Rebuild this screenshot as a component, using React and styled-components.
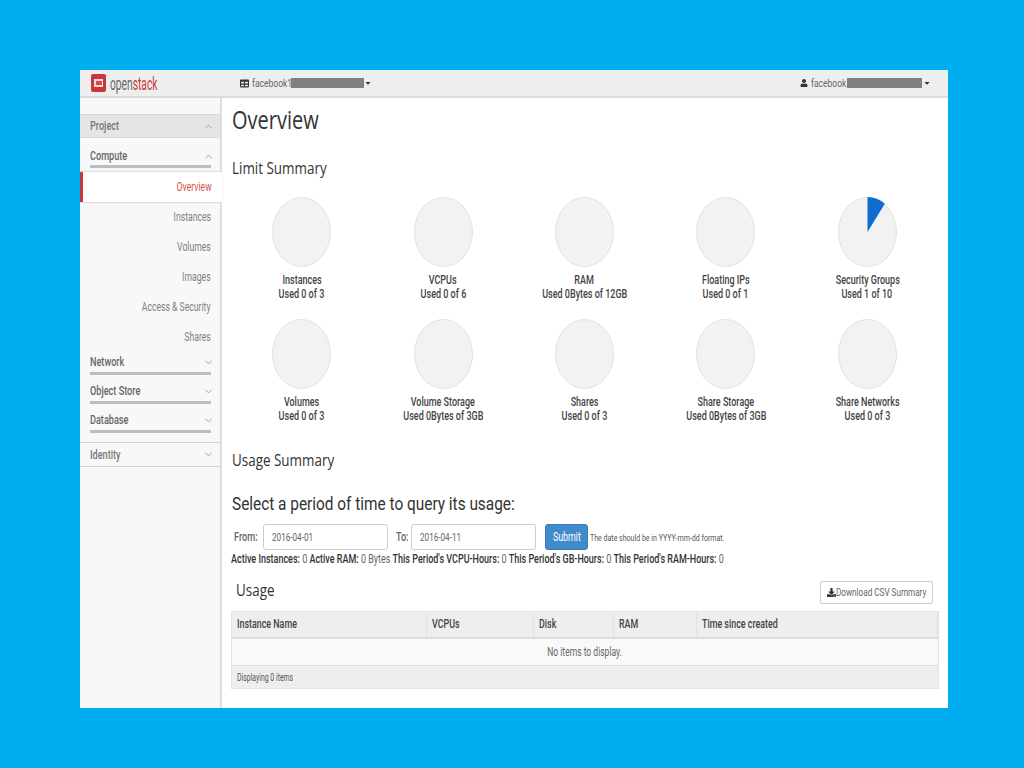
import React from "react";
import styled, { createGlobalStyle } from "styled-components";
import { ChevronUp, ChevronDown } from "lucide-react";
import { FaUser, FaDownload, FaTable, FaCaretDown } from "react-icons/fa";

const Global = createGlobalStyle`
  html, body { margin: 0; padding: 0; background: #00aeef; }
  * { box-sizing: border-box; }
`;

const Stage = styled.div`
  width: 1024px;
  height: 768px;
  padding: 70px 76px 60px 80px;
  background: #00aeef;
  font-family: Roboto, sans-serif;
  font-size: 12px;
  color: #333;
`;

// the screenshot is squeezed sideways, so text is narrowed to match it
const Narrow = styled.span`
  display: inline-block;
  flex: none;
  white-space: nowrap;
  transform: scaleX(${(p) => p.$sx || 0.74});
  transform-origin: ${(p) => p.$o || "left"} center;
`;

const Fixed = styled.span`
  display: inline-block;
  flex: none;
  width: ${(p) => p.$w}px;
`;

const Window = styled.div`
  width: 868px;
  height: 638px;
  background: #fff;
  display: flex;
  flex-direction: column;
  overflow: hidden;
`;

const Navbar = styled.header`
  height: 28px;
  flex: none;
  background: #eeeeee;
  border-bottom: 2px solid #dcdcdc;
  display: flex;
  align-items: center;
  padding: 0 17px 0 11px;
  color: #555;
`;

const Brand = styled.div`
  width: 149px;
  display: flex;
  align-items: center;
  gap: 4px;
  font-size: 19px;
  color: #666;
  & b { font-weight: 400; color: #c8383a; }
`;

const Project = styled.div`
  display: flex;
  align-items: center;
  gap: 3px;
  font-size: 11.5px;
  color: #666;
  & svg { flex: none; color: #333; }
`;

const Caret = styled(FaCaretDown)`
  margin-left: ${(p) => p.$ml}px;
`;

const Redacted = styled.span`
  display: inline-block;
  height: 10px;
  width: ${(p) => p.$w}px;
  background: #808080;
`;

const UserMenu = styled(Project)`
  margin-left: auto;
`;

const Body = styled.div`
  flex: 1;
  display: flex;
  min-height: 0;
`;

const Sidebar = styled.nav`
  width: 142px;
  flex: none;
  background: #f8f8f8;
  border-right: 2px solid #dedede;
  padding-top: 16px;
`;

const Panel = styled.div`
  height: 24px;
  display: flex;
  align-items: center;
  justify-content: space-between;
  padding: 0 9px 0 10px;
  background: #e5e5e5;
  border-top: 1px solid #dadada;
  border-bottom: 1px solid #dadada;
  font-weight: 500;
  color: #777;
  & svg { margin-right: -3px; color: #999; }
`;

const Group = styled.div`
  height: ${(p) => p.$h || 29}px;
  padding: ${(p) => p.$pt || 1}px 9px 0 10px;
`;

const GroupHead = styled.div`
  display: flex;
  align-items: center;
  justify-content: space-between;
  height: ${(p) => (p.$compact ? 20 : 22)}px;
  padding-bottom: 1px;
  font-weight: 500;
  color: #666;
  border-bottom: 3px solid #bdbdbd;
  & svg { margin-right: -3px; color: #999; }
`;

const Leaf = styled.div`
  height: 30px;
  display: flex;
  align-items: center;
  justify-content: flex-end;
  padding-right: ${(p) => (p.$active ? 10 : 9)}px;
  color: ${(p) => (p.$active ? "#d2533f" : "#808080")};
  background: ${(p) => (p.$active ? "#fff" : "transparent")};
  border-left: ${(p) => (p.$active ? "3px solid #c8383a" : "0")};
  width: ${(p) => (p.$active ? "142px" : "auto")};
  box-shadow: ${(p) => (p.$active ? "0 1px 1px #ddd, 0 -1px 1px #ddd" : "none")};
`;

const Identity = styled.div`
  height: 25px;
  margin-top: 3px;
  display: flex;
  align-items: center;
  justify-content: space-between;
  padding: 0 9px 0 10px;
  border-top: 1px solid #d0d0d0;
  border-bottom: 1px solid #d0d0d0;
  font-weight: 500;
  color: #777;
  & svg { margin-right: -3px; color: #999; }
`;

const Main = styled.main`
  flex: 1;
  padding: 0 9px;
  min-width: 0;
`;

const PageTitle = styled.h1`
  margin: 4px 0 0 1px;
  height: 34px;
  font-family: "Open Sans", sans-serif;
  font-weight: 400;
  font-size: 26px;
  line-height: 34px;
  color: #333;
  transform: scaleX(0.77);
  transform-origin: left;
`;

const Section = styled.h2`
  margin: ${(p) => p.$mt || 0}px 0 0 1px;
  height: 24px;
  font-family: "Open Sans", sans-serif;
  font-weight: 400;
  font-size: 17px;
  line-height: 24px;
  color: #333;
  transform: scaleX(0.79);
  transform-origin: left;
`;

const PieGrid = styled.div`
  display: grid;
  grid-template-columns: repeat(5, 1fr);
  row-gap: 17px;
  margin: 17px 1px 0 0;
`;

const PieCell = styled.div`
  display: flex;
  flex-direction: column;
  align-items: center;
  height: 105px;
  font-weight: 500;
  color: #444;
  line-height: 14px;
  text-align: center;
  & svg { margin-bottom: 6px; }
`;

const Question = styled.h3`
  margin: 20px 0 0 1px;
  height: 24px;
  font-family: Roboto, sans-serif;
  font-weight: 400;
  font-size: 18px;
  line-height: 24px;
  color: #333;
  transform: scaleX(0.855);
  transform-origin: left;
`;

const DateForm = styled.div`
  display: flex;
  align-items: center;
  margin-top: 8px;
  height: 26px;
  padding-left: 3px;
  font-weight: 500;
  color: #666;
`;

const DateInput = styled.div`
  height: 26px;
  width: 125px;
  flex: none;
  margin-right: ${(p) => p.$mr}px;
  border: 1px solid #ccc;
  border-radius: 3px;
  padding: 0 8px;
  display: flex;
  align-items: center;
  font-size: 11px;
  font-weight: 400;
  color: #666;
`;

const Submit = styled.button`
  height: 26px;
  width: 43px;
  flex: none;
  padding: 0;
  background: #428bca;
  border: 1px solid #357ebd;
  border-radius: 3px;
  color: #fff;
  font: inherit;
  font-weight: 400;
`;

const Hint = styled.span`
  margin-left: 2px;
  font-weight: 400;
  font-size: 9.5px;
  color: #555;
`;

const Stats = styled.div`
  margin-top: 2px;
  height: 15px;
  line-height: 15px;
  color: #666;
  & b { font-weight: 500; color: #333; }
`;

const UsageBar = styled.div`
  display: flex;
  align-items: center;
  justify-content: space-between;
  height: 24px;
  margin-top: 11px;
  padding: 0 6px 0 5px;
`;

const UsageTitle = styled(Section)`
  margin: 0;
`;

const CsvButton = styled.button`
  width: 113px;
  height: 23px;
  flex: none;
  align-self: flex-end;
  margin-bottom: -2px;
  padding: 0 0 0 6px;
  display: flex;
  align-items: center;
  gap: 0;
  background: #fff;
  border: 1px solid #ccc;
  border-radius: 2px;
  font: inherit;
  font-size: 11px;
  color: #666;
  & svg { flex: none; color: #333; }
`;

const Table = styled.div`
  margin-top: 9px;
  border: 1px solid #e3e3e3;
`;

const HeadRow = styled.div`
  display: grid;
  grid-template-columns: 195px 107px 80px 83px 1fr;
  height: 27px;
  background: #eeeeee;
  border-bottom: 2px solid #ddd;
`;

const HeadCell = styled.div`
  display: flex;
  align-items: center;
  padding: 0 0 2px 5px;
  font-weight: 500;
  color: #444;
  border-right: 1px solid #e2e2e2;
`;

const EmptyRow = styled.div`
  height: 27px;
  display: flex;
  align-items: center;
  justify-content: center;
  background: #f9f9f9;
  color: #666;
  border-bottom: 1px solid #ddd;
`;

const FootRow = styled.div`
  height: 22px;
  display: flex;
  align-items: center;
  padding-left: 5px;
  background: #eeeeee;
  font-size: 10px;
  color: #555;
`;

const Logo = () => (
  <svg width="15" height="18" viewBox="0 0 15 18">
    <rect width="15" height="18" rx="2" fill="#c8383a" />
    <rect x="3" y="5" width="9" height="8" fill="#f3dcdc" />
    <rect x="5" y="7" width="6" height="4" fill="#d8494a" />
  </svg>
);

const Pie = ({ used = 0, total = 1 }) => {
  const a = (used / total) * 2 * Math.PI;
  const x = 29.5 + 29.5 * Math.sin(a);
  const y = 35 - 35 * Math.cos(a);
  return (
    <svg width="59" height="70" viewBox="0 0 59 70">
      <ellipse cx="29.5" cy="35" rx="29" ry="34.5" fill="#f2f2f2" stroke="#e2e2e2" />
      {used > 0 && <path d={`M29.5 35 L29.5 0 A29.5 35 0 0 1 ${x} ${y} Z`} fill="#0d6cd0" />}
    </svg>
  );
};

const limits = [
  ["Instances", "Used 0 of 3"],
  ["VCPUs", "Used 0 of 6"],
  ["RAM", "Used 0Bytes of 12GB"],
  ["Floating IPs", "Used 0 of 1"],
  ["Security Groups", "Used 1 of 10", 1, 10],
  ["Volumes", "Used 0 of 3"],
  ["Volume Storage", "Used 0Bytes of 3GB"],
  ["Shares", "Used 0 of 3"],
  ["Share Storage", "Used 0Bytes of 3GB"],
  ["Share Networks", "Used 0 of 3"],
];

const leaves = ["Instances", "Volumes", "Images", "Access & Security", "Shares"];

export default function App() {
  return (
    <Stage>
      <Global />
      <Window>
        <Navbar>
          <Brand>
            <Logo />
            <Fixed $w={47}><Narrow $sx={0.54}>open<b>stack</b></Narrow></Fixed>
          </Brand>
          <Project>
            <FaTable size={9} />
            <Fixed $w={36}><Narrow>facebook1</Narrow></Fixed>
            <Redacted $w={73} />
            <Caret size={8} $ml={-3} />
          </Project>
          <UserMenu>
            <FaUser size={8} />
            <Fixed $w={33}><Narrow>facebook</Narrow></Fixed>
            <Redacted $w={75} />
            <Caret size={8} $ml={-2} />
          </UserMenu>
        </Navbar>
        <Body>
          <Sidebar>
            <Panel><Narrow $sx={0.76}>Project</Narrow> <ChevronUp size={11} /></Panel>
            <Group $h={34} $pt={10}>
              <GroupHead $compact><Narrow $sx={0.76}>Compute</Narrow> <ChevronUp size={11} /></GroupHead>
            </Group>
            <Leaf $active><Narrow $o="right" $sx={0.72}>Overview</Narrow></Leaf>
            {leaves.map((l) => (
              <Leaf key={l}><Narrow $o="right" $sx={0.72}>{l}</Narrow></Leaf>
            ))}
            <Group><GroupHead><Narrow $sx={0.76}>Network</Narrow> <ChevronDown size={11} /></GroupHead></Group>
            <Group><GroupHead><Narrow $sx={0.76}>Object Store</Narrow> <ChevronDown size={11} /></GroupHead></Group>
            <Group><GroupHead><Narrow $sx={0.76}>Database</Narrow> <ChevronDown size={11} /></GroupHead></Group>
            <Identity><Narrow $sx={0.76}>Identity</Narrow> <ChevronDown size={11} /></Identity>
          </Sidebar>
          <Main>
            <PageTitle>Overview</PageTitle>
            <Section $mt={20}>Limit Summary</Section>
            <PieGrid>
              {limits.map(([name, text, used, total]) => (
                <PieCell key={name}>
                  <Pie used={used} total={total} />
                  <Narrow $o="center" $sx={0.75}>{name}</Narrow>
                  <Narrow $o="center" $sx={0.75}>{text}</Narrow>
                </PieCell>
              ))}
            </PieGrid>
            <Section $mt={24}>Usage Summary</Section>
            <Question>Select a period of time to query its usage:</Question>
            <DateForm>
              <Fixed $w={29}><Narrow $sx={0.76}>From:</Narrow></Fixed>
              <DateInput $mr={8}><Narrow>2016-04-01</Narrow></DateInput>
              <Fixed $w={15}><Narrow $sx={0.76}>To:</Narrow></Fixed>
              <DateInput $mr={9}><Narrow>2016-04-11</Narrow></DateInput>
              <Submit><Narrow $o="center">Submit</Narrow></Submit>
              <Hint><Narrow>The date should be in YYYY-mm-dd format.</Narrow></Hint>
            </DateForm>
            <Stats>
              <Narrow $sx={0.749}>
                <b>Active Instances:</b> 0 <b>Active RAM:</b> 0 Bytes <b>This Period's VCPU-Hours:</b> 0{" "}
                <b>This Period's GB-Hours:</b> 0 <b>This Period's RAM-Hours:</b> 0
              </Narrow>
            </Stats>
            <UsageBar>
              <UsageTitle>Usage</UsageTitle>
              <CsvButton><FaDownload size={9} /> <Narrow>Download CSV Summary</Narrow></CsvButton>
            </UsageBar>
            <Table>
              <HeadRow>
                <HeadCell><Narrow>Instance Name</Narrow></HeadCell>
                <HeadCell><Narrow>VCPUs</Narrow></HeadCell>
                <HeadCell><Narrow>Disk</Narrow></HeadCell>
                <HeadCell><Narrow>RAM</Narrow></HeadCell>
                <HeadCell><Narrow>Time since created</Narrow></HeadCell>
              </HeadRow>
              <EmptyRow><Narrow $o="center" $sx={0.71}>No items to display.</Narrow></EmptyRow>
              <FootRow><Narrow $sx={0.69}>Displaying 0 items</Narrow></FootRow>
            </Table>
          </Main>
        </Body>
      </Window>
    </Stage>
  );
}
